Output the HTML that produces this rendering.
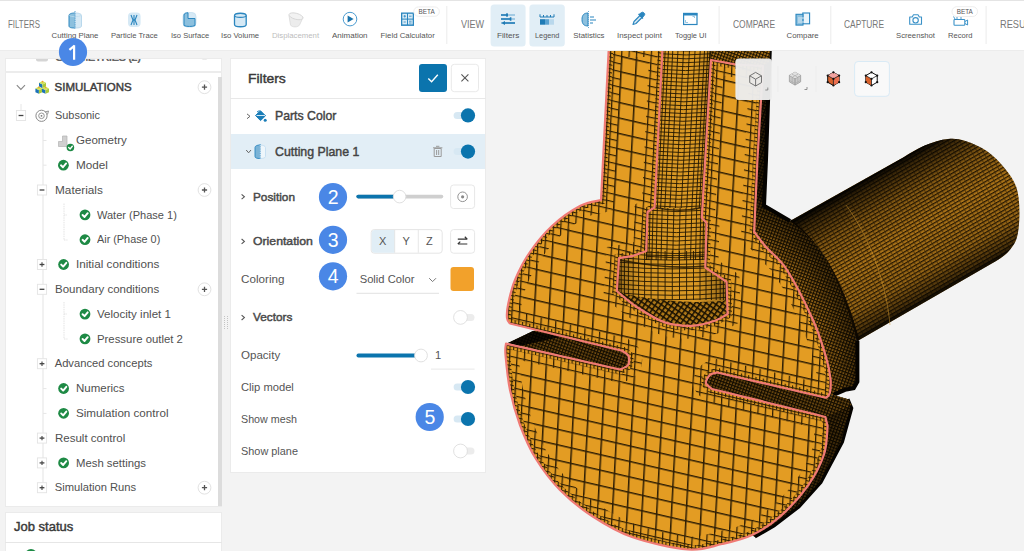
<!DOCTYPE html><html><head><meta charset="utf-8"><style>
html,body{margin:0;padding:0;width:1024px;height:551px;overflow:hidden;background:#f3f3f3;position:relative;font-family:"Liberation Sans",sans-serif;}
.t{position:absolute;white-space:nowrap;transform-origin:0 0;}
.a{position:absolute;}
</style></head><body>
<svg class="a" style="left:0;top:0" width="1024" height="551" viewBox="0 0 1024 551">
<defs>
<pattern id="pc" width="14.6" height="15.5" patternUnits="userSpaceOnUse" patternTransform="translate(3,6) skewY(13) skewX(-3)">
<rect width="14.6" height="15.5" fill="#e39c23"/><rect width="1.5" height="15.5" fill="#2e1e04"/><rect width="14.6" height="1.5" fill="#2e1e04"/></pattern>
<pattern id="pm" width="7.3" height="7.75" patternUnits="userSpaceOnUse" patternTransform="translate(3,6) skewY(13) skewX(-3)">
<rect width="7.3" height="7.75" fill="#e39c23"/><rect width="1.2" height="7.75" fill="#2e1e04"/><rect width="7.3" height="1.2" fill="#2e1e04"/></pattern>
<pattern id="pf" width="3.65" height="3.9" patternUnits="userSpaceOnUse" patternTransform="translate(3,6) skewY(13) skewX(-3)">
<rect width="3.65" height="3.9" fill="#e39c23"/><rect width="1.1" height="3.9" fill="#2e1e04"/><rect width="3.65" height="1.1" fill="#2e1e04"/></pattern>
<pattern id="pb" width="4.6" height="4.4" patternUnits="userSpaceOnUse" patternTransform="skewY(-2)">
<rect width="4.6" height="4.4" fill="#e6a126"/><rect width="1.0" height="4.4" fill="#2e1e04"/><rect width="4.6" height="1.0" fill="#2e1e04"/></pattern>
<pattern id="pcyl" width="5" height="3.4" patternUnits="userSpaceOnUse" patternTransform="rotate(-30)">
<rect width="5" height="3.4" fill="#b87c1a"/><rect width="5" height="1.2" fill="#2a1a02"/><rect width="0.7" height="3.4" fill="#4a3006"/></pattern>
<pattern id="pside" width="3" height="3" patternUnits="userSpaceOnUse" patternTransform="rotate(20)">
<rect width="3.6" height="3.6" fill="#c2821c"/><rect width="1.2" height="3.6" fill="#1e1402"/><rect width="3.6" height="1.2" fill="#1e1402"/></pattern>
<pattern id="pdiag" width="4.5" height="4.5" patternUnits="userSpaceOnUse" patternTransform="rotate(35)">
<rect width="4.5" height="4.5" fill="#d8951f"/><rect width="1.5" height="4.5" fill="#1e1402"/><rect width="4.5" height="1.5" fill="#1e1402"/></pattern>
<radialGradient id="gside" gradientUnits="userSpaceOnUse" cx="668" cy="372" r="200"><stop offset="0.78" stop-color="#000" stop-opacity="0"/><stop offset="1" stop-color="#000" stop-opacity="0.7"/></radialGradient>
<clipPath id="cf"><path d="M609,44 L601,200 C597.5,201.0 588.2,201.7 580.0,206.0 C571.8,210.3 560.3,218.3 552.0,226.0 C543.7,233.7 536.2,243.0 530.0,252.0 C523.8,261.0 518.7,271.2 515.0,280.0 C511.3,288.8 509.3,298.7 508.0,305.0 C506.7,311.3 506.7,314.9 507.0,318.0 C507.3,321.1 509.5,322.6 510.0,323.5 L622,350.8 C623.1,351.7 627.5,353.6 628.5,356.0 C629.5,358.4 629.4,362.8 628.0,365.0 C626.6,367.2 621.3,368.8 620.0,369.5 L506,343.6 C505.9,345.5 504.8,347.3 505.5,355.0 C506.2,362.7 507.6,378.3 510.0,390.0 C512.4,401.7 515.7,413.5 520.0,425.0 C524.3,436.5 529.3,448.2 536.0,459.0 C542.7,469.8 550.7,480.5 560.0,490.0 C569.3,499.5 580.0,508.2 592.0,516.0 C604.0,523.8 616.0,531.4 632.0,537.0 C648.0,542.6 673.0,548.3 688.0,549.5 C703.0,550.7 711.3,546.4 722.0,544.0 C732.7,541.6 742.3,539.6 752.0,535.0 C761.7,530.4 770.7,524.8 780.0,516.6 C789.3,508.4 800.7,496.0 808.0,485.6 C815.3,475.2 820.7,464.4 824.0,454.5 C827.3,444.6 827.0,430.8 827.6,426.0 L825.4,417 L818,415 L712,389 C711.0,388.0 706.3,385.3 706.0,383.0 C705.7,380.7 708.2,376.8 710.0,375.0 C711.8,373.2 715.8,372.9 717.0,372.5 L826,397.8 C826.6,397.0 829.0,396.1 829.8,393.0 C830.5,389.9 831.1,385.0 830.5,379.0 C829.9,373.0 828.9,366.8 826.0,357.0 C823.1,347.2 819.5,334.5 813.0,320.0 C806.5,305.5 794.8,282.2 787.0,270.0 C779.2,257.8 771.5,253.4 766.0,247.0 C760.5,240.6 756.2,234.3 754.2,231.8 L757.4,160 L761,100 L763,66 L736,64.5 L711,60 L701.8,218 L706.5,222.8 L705.3,267.6 L716,274.7 L726.6,281.8 L727.6,314 C725.3,315.2 719.9,319.0 714.0,321.0 C708.1,323.0 700.2,325.6 692.0,325.8 C683.8,326.0 673.8,325.5 664.7,322.4 C655.6,319.3 645.4,312.6 637.4,307.4 C629.4,302.2 620.2,293.7 616.8,291.0 L619,258.2 L633.3,255.8 L646.3,251 L647.5,212 L654.6,207.4 L662.7,44 Z"/></clipPath><clipPath id="ccav"><path d="M662.7,44 L654.6,207.4 L647.5,212 L646.3,251 L633.3,255.8 L619,258.2 L616.8,291 C620.2,293.7 629.4,302.2 637.4,307.4 C645.4,312.6 655.6,319.3 664.7,322.4 C673.8,325.5 683.8,326.0 692.0,325.8 C700.2,325.6 708.1,323.0 714.0,321.0 C719.9,319.0 725.3,315.2 727.6,314.0 L726.6,281.8 L716,274.7 L705.3,267.6 L706.5,222.8 L701.8,218 L711,60 L711,44 Z"/></clipPath>
<linearGradient id="gcyl" gradientUnits="userSpaceOnUse" x1="900" y1="160" x2="967.5" y2="277">
<stop offset="0" stop-color="#000" stop-opacity="0.95"/><stop offset="0.06" stop-color="#000" stop-opacity="0.7"/><stop offset="0.25" stop-color="#000" stop-opacity="0.3"/><stop offset="0.5" stop-color="#000" stop-opacity="0.08"/><stop offset="0.8" stop-color="#000" stop-opacity="0.2"/><stop offset="0.95" stop-color="#000" stop-opacity="0.6"/><stop offset="1" stop-color="#000" stop-opacity="0.9"/></linearGradient>
<linearGradient id="gbolt" x1="0" y1="0" x2="1" y2="0">
<stop offset="0" stop-color="#000" stop-opacity="0.35"/><stop offset="0.2" stop-color="#000" stop-opacity="0.08"/><stop offset="0.7" stop-color="#000" stop-opacity="0.05"/><stop offset="1" stop-color="#000" stop-opacity="0.35"/></linearGradient>
</defs>
<path d="M790,221 L900,159.2 C904.1,156.9 916.7,148.8 924.7,145.4 C932.7,142.0 941.1,139.6 947.9,138.9 C954.7,138.2 958.8,138.9 965.3,141.0 C971.8,143.1 980.6,146.7 987.1,151.2 C993.6,155.7 999.6,162.0 1004.5,167.9 C1009.4,173.8 1013.7,179.6 1016.2,186.8 C1018.7,194.0 1019.3,202.6 1019.4,211.0 C1019.5,219.4 1018.9,230.2 1017.0,237.0 C1015.1,243.8 1011.4,248.1 1008.0,252.0 C1004.6,255.9 998.8,259.1 996.9,260.5 L857.4,341 L835.8,280 L822.7,253.6 L805,234 Z" fill="url(#pcyl)"/>
<path d="M790,221 L900,159.2 C904.1,156.9 916.7,148.8 924.7,145.4 C932.7,142.0 941.1,139.6 947.9,138.9 C954.7,138.2 958.8,138.9 965.3,141.0 C971.8,143.1 980.6,146.7 987.1,151.2 C993.6,155.7 999.6,162.0 1004.5,167.9 C1009.4,173.8 1013.7,179.6 1016.2,186.8 C1018.7,194.0 1019.3,202.6 1019.4,211.0 C1019.5,219.4 1018.9,230.2 1017.0,237.0 C1015.1,243.8 1011.4,248.1 1008.0,252.0 C1004.6,255.9 998.8,259.1 996.9,260.5 L857.4,341 L835.8,280 L822.7,253.6 L805,234 Z" fill="url(#gcyl)"/>
<path d="M790,221 C800,229 815,244 826,262 C838,282 850,312 857.4,341" fill="none" stroke="#0a0600" stroke-width="4" opacity="0.9"/>
<path d="M846,205 C868,235 886,280 890,325" stroke="#d49a30" stroke-width="1" fill="none" opacity="0.5"/>
<path d="M754.2,231.8 L757.4,160 L761,100 L763,44 L771,44 L766,160 L764,205.7 L790,221 C792.5,223.2 799.5,228.6 805.0,234.0 C810.5,239.4 817.6,245.9 822.7,253.6 C827.8,261.3 831.6,270.3 835.8,280.0 C840.0,289.7 844.6,302.0 848.0,312.0 C851.4,322.0 854.4,330.3 856.0,340.0 C857.6,349.7 857.2,363.0 857.4,370.0 C857.6,377.0 858.0,378.8 857.4,381.8 C856.8,384.9 855.8,387.0 853.7,388.3 C851.6,389.6 848.4,388.7 845.0,389.8 C841.6,390.9 835.3,394.0 833.4,394.8 L826,397.8 L829.8,393 L830.5,379 L826,357 L813,320 L787,270 L766,247 Z" fill="url(#pside)"/>
<path d="M857.4,341 L848,312 L835.8,280 L822.7,253.6 L805,234 L790,221 L764,205.7 L766,160 L771,44 L763,44 L761,100 L757.4,160 L754.2,231.8 L766,247 L787,270 L813,320 L826,357 L830.5,379 L829.8,393 L826,397.8 L833.4,394.8 L845,389.8 L853.7,388.3 L857.4,381.8 Z" fill="#000" opacity="0.1"/>
<path d="M754.2,231.8 L757.4,160 L761,100 L763,44 L771,44 L766,160 L764,205.7 L790,221 C792.5,223.2 799.5,228.6 805.0,234.0 C810.5,239.4 817.6,245.9 822.7,253.6 C827.8,261.3 831.6,270.3 835.8,280.0 C840.0,289.7 844.6,302.0 848.0,312.0 C851.4,322.0 854.4,330.3 856.0,340.0 C857.6,349.7 857.2,363.0 857.4,370.0 C857.6,377.0 858.0,378.8 857.4,381.8 C856.8,384.9 855.8,387.0 853.7,388.3 C851.6,389.6 848.4,388.7 845.0,389.8 C841.6,390.9 835.3,394.0 833.4,394.8 L826,397.8 L829.8,393 L830.5,379 L826,357 L813,320 L787,270 L766,247 Z" fill="url(#gside)"/>
<path d="M770,44 L766,160 L764,205.7 L790,221" fill="none" stroke="#050300" stroke-width="4"/>
<path d="M857.4,341 L857.4,381.8 L853.7,388.3 L845,389.8 L833.4,394.8" fill="none" stroke="#050300" stroke-width="4"/>
<path d="M711,44 L771,44 L769,62 L763,66 L736,64.5 L711,60 Z" fill="url(#pside)"/>
<path d="M826,417 L836.3,396.3 L848,399.2 L851.8,408 L842.5,442 L821,482.5 L799,507 L774,526 L755,537 L752,535 L780,516.6 L808,485.6 L824,454.5 L827.6,426 Z" fill="url(#pside)"/>
<path d="M826,417 L836.3,396.3 L848,399.2 L851.8,408 L842.5,442 L821,482.5 L799,507 L774,526 L755,537 L752,535 L780,516.6 L808,485.6 L824,454.5 L827.6,426 Z" fill="#000" opacity="0.62"/>
<path d="M848,399.2 L851.8,408 L842.5,442 L821,482.5 L799,507 L774,526 L755,537" fill="none" stroke="#050300" stroke-width="3"/>
<path d="M712,389 L706,383 L710,375 L717,372.5 L826,397.8 L833.4,394.8 L848,399.2 L851.5,405 L826,417 L818,415 Z" fill="url(#pside)"/>
<path d="M712,389 L706,383 L710,375 L717,372.5 L826,397.8 L833.4,394.8 L848,399.2 L851.5,405 L826,417 L818,415 Z" fill="#000" opacity="0.4"/>
<path d="M508,343 L533,331 L545,329 L622,350.8 L628.5,356 L628,365 L620,369.5 Z" fill="url(#pside)"/>
<path d="M508,343 L533,331 L545,329 L622,350.8 L628.5,356 L628,365 L620,369.5 Z" fill="#000" opacity="0.4"/>
<path d="M508,343 L533,331 L560,337 L520,346 Z" fill="#000" opacity="0.8"/>
<path d="M609,44 L601,200 C597.5,201.0 588.2,201.7 580.0,206.0 C571.8,210.3 560.3,218.3 552.0,226.0 C543.7,233.7 536.2,243.0 530.0,252.0 C523.8,261.0 518.7,271.2 515.0,280.0 C511.3,288.8 509.3,298.7 508.0,305.0 C506.7,311.3 506.7,314.9 507.0,318.0 C507.3,321.1 509.5,322.6 510.0,323.5 L622,350.8 C623.1,351.7 627.5,353.6 628.5,356.0 C629.5,358.4 629.4,362.8 628.0,365.0 C626.6,367.2 621.3,368.8 620.0,369.5 L506,343.6 C505.9,345.5 504.8,347.3 505.5,355.0 C506.2,362.7 507.6,378.3 510.0,390.0 C512.4,401.7 515.7,413.5 520.0,425.0 C524.3,436.5 529.3,448.2 536.0,459.0 C542.7,469.8 550.7,480.5 560.0,490.0 C569.3,499.5 580.0,508.2 592.0,516.0 C604.0,523.8 616.0,531.4 632.0,537.0 C648.0,542.6 673.0,548.3 688.0,549.5 C703.0,550.7 711.3,546.4 722.0,544.0 C732.7,541.6 742.3,539.6 752.0,535.0 C761.7,530.4 770.7,524.8 780.0,516.6 C789.3,508.4 800.7,496.0 808.0,485.6 C815.3,475.2 820.7,464.4 824.0,454.5 C827.3,444.6 827.0,430.8 827.6,426.0 L825.4,417 L818,415 L712,389 C711.0,388.0 706.3,385.3 706.0,383.0 C705.7,380.7 708.2,376.8 710.0,375.0 C711.8,373.2 715.8,372.9 717.0,372.5 L826,397.8 C826.6,397.0 829.0,396.1 829.8,393.0 C830.5,389.9 831.1,385.0 830.5,379.0 C829.9,373.0 828.9,366.8 826.0,357.0 C823.1,347.2 819.5,334.5 813.0,320.0 C806.5,305.5 794.8,282.2 787.0,270.0 C779.2,257.8 771.5,253.4 766.0,247.0 C760.5,240.6 756.2,234.3 754.2,231.8 L757.4,160 L761,100 L763,66 L736,64.5 L711,60 L701.8,218 L706.5,222.8 L705.3,267.6 L716,274.7 L726.6,281.8 L727.6,314 C725.3,315.2 719.9,319.0 714.0,321.0 C708.1,323.0 700.2,325.6 692.0,325.8 C683.8,326.0 673.8,325.5 664.7,322.4 C655.6,319.3 645.4,312.6 637.4,307.4 C629.4,302.2 620.2,293.7 616.8,291.0 L619,258.2 L633.3,255.8 L646.3,251 L647.5,212 L654.6,207.4 L662.7,44 Z" fill="url(#pc)"/>
<g clip-path="url(#cf)"><path d="M609,44 L601,200 C597.5,201.0 588.2,201.7 580.0,206.0 C571.8,210.3 560.3,218.3 552.0,226.0 C543.7,233.7 536.2,243.0 530.0,252.0 C523.8,261.0 518.7,271.2 515.0,280.0 C511.3,288.8 509.3,298.7 508.0,305.0 C506.7,311.3 506.7,314.9 507.0,318.0 C507.3,321.1 509.5,322.6 510.0,323.5 L622,350.8 C623.1,351.7 627.5,353.6 628.5,356.0 C629.5,358.4 629.4,362.8 628.0,365.0 C626.6,367.2 621.3,368.8 620.0,369.5 L506,343.6 C505.9,345.5 504.8,347.3 505.5,355.0 C506.2,362.7 507.6,378.3 510.0,390.0 C512.4,401.7 515.7,413.5 520.0,425.0 C524.3,436.5 529.3,448.2 536.0,459.0 C542.7,469.8 550.7,480.5 560.0,490.0 C569.3,499.5 580.0,508.2 592.0,516.0 C604.0,523.8 616.0,531.4 632.0,537.0 C648.0,542.6 673.0,548.3 688.0,549.5 C703.0,550.7 711.3,546.4 722.0,544.0 C732.7,541.6 742.3,539.6 752.0,535.0 C761.7,530.4 770.7,524.8 780.0,516.6 C789.3,508.4 800.7,496.0 808.0,485.6 C815.3,475.2 820.7,464.4 824.0,454.5 C827.3,444.6 827.0,430.8 827.6,426.0 L825.4,417 L818,415 L712,389 C711.0,388.0 706.3,385.3 706.0,383.0 C705.7,380.7 708.2,376.8 710.0,375.0 C711.8,373.2 715.8,372.9 717.0,372.5 L826,397.8 C826.6,397.0 829.0,396.1 829.8,393.0 C830.5,389.9 831.1,385.0 830.5,379.0 C829.9,373.0 828.9,366.8 826.0,357.0 C823.1,347.2 819.5,334.5 813.0,320.0 C806.5,305.5 794.8,282.2 787.0,270.0 C779.2,257.8 771.5,253.4 766.0,247.0 C760.5,240.6 756.2,234.3 754.2,231.8 L757.4,160 L761,100 L763,66 L736,64.5 L711,60 L701.8,218 L706.5,222.8 L705.3,267.6 L716,274.7 L726.6,281.8 L727.6,314 C725.3,315.2 719.9,319.0 714.0,321.0 C708.1,323.0 700.2,325.6 692.0,325.8 C683.8,326.0 673.8,325.5 664.7,322.4 C655.6,319.3 645.4,312.6 637.4,307.4 C629.4,302.2 620.2,293.7 616.8,291.0 L619,258.2 L633.3,255.8 L646.3,251 L647.5,212 L654.6,207.4 L662.7,44 Z" fill="none" stroke="url(#pm)" stroke-width="26" opacity="1"/><path d="M609,44 L601,200 C597.5,201.0 588.2,201.7 580.0,206.0 C571.8,210.3 560.3,218.3 552.0,226.0 C543.7,233.7 536.2,243.0 530.0,252.0 C523.8,261.0 518.7,271.2 515.0,280.0 C511.3,288.8 509.3,298.7 508.0,305.0 C506.7,311.3 506.7,314.9 507.0,318.0 C507.3,321.1 509.5,322.6 510.0,323.5 L622,350.8 C623.1,351.7 627.5,353.6 628.5,356.0 C629.5,358.4 629.4,362.8 628.0,365.0 C626.6,367.2 621.3,368.8 620.0,369.5 L506,343.6 C505.9,345.5 504.8,347.3 505.5,355.0 C506.2,362.7 507.6,378.3 510.0,390.0 C512.4,401.7 515.7,413.5 520.0,425.0 C524.3,436.5 529.3,448.2 536.0,459.0 C542.7,469.8 550.7,480.5 560.0,490.0 C569.3,499.5 580.0,508.2 592.0,516.0 C604.0,523.8 616.0,531.4 632.0,537.0 C648.0,542.6 673.0,548.3 688.0,549.5 C703.0,550.7 711.3,546.4 722.0,544.0 C732.7,541.6 742.3,539.6 752.0,535.0 C761.7,530.4 770.7,524.8 780.0,516.6 C789.3,508.4 800.7,496.0 808.0,485.6 C815.3,475.2 820.7,464.4 824.0,454.5 C827.3,444.6 827.0,430.8 827.6,426.0 L825.4,417 L818,415 L712,389 C711.0,388.0 706.3,385.3 706.0,383.0 C705.7,380.7 708.2,376.8 710.0,375.0 C711.8,373.2 715.8,372.9 717.0,372.5 L826,397.8 C826.6,397.0 829.0,396.1 829.8,393.0 C830.5,389.9 831.1,385.0 830.5,379.0 C829.9,373.0 828.9,366.8 826.0,357.0 C823.1,347.2 819.5,334.5 813.0,320.0 C806.5,305.5 794.8,282.2 787.0,270.0 C779.2,257.8 771.5,253.4 766.0,247.0 C760.5,240.6 756.2,234.3 754.2,231.8 L757.4,160 L761,100 L763,66 L736,64.5 L711,60 L701.8,218 L706.5,222.8 L705.3,267.6 L716,274.7 L726.6,281.8 L727.6,314 C725.3,315.2 719.9,319.0 714.0,321.0 C708.1,323.0 700.2,325.6 692.0,325.8 C683.8,326.0 673.8,325.5 664.7,322.4 C655.6,319.3 645.4,312.6 637.4,307.4 C629.4,302.2 620.2,293.7 616.8,291.0 L619,258.2 L633.3,255.8 L646.3,251 L647.5,212 L654.6,207.4 L662.7,44 Z" fill="none" stroke="url(#pf)" stroke-width="9"/></g>
<path d="M662.7,44 L654.6,207.4 L647.5,212 L646.3,251 L633.3,255.8 L619,258.2 L616.8,291 C620.2,293.7 629.4,302.2 637.4,307.4 C645.4,312.6 655.6,319.3 664.7,322.4 C673.8,325.5 683.8,326.0 692.0,325.8 C700.2,325.6 708.1,323.0 714.0,321.0 C719.9,319.0 725.3,315.2 727.6,314.0 L726.6,281.8 L716,274.7 L705.3,267.6 L706.5,222.8 L701.8,218 L711,60 L711,44 Z" fill="#e6a126"/>
<g clip-path="url(#ccav)"><g stroke="#241802" stroke-width="0.9" fill="none"><path d="M662.7,44 L654.6,208 M663.4,44 L655.3,208 M665.5,44 L657.3,208 M668.8,44 L660.6,208 M673.1,44 L664.8,208 M678.3,44 L669.9,208 M683.9,44 L675.4,208 M689.8,44 L681.2,208 M695.4,44 L686.7,208 M700.6,44 L691.8,208 M704.9,44 L696.0,208 M708.2,44 L699.3,208 M710.3,44 L701.3,208 M711.0,44 L702.0,208 M662.6,46.0 Q686.7,48.4 710.9,46.0 M662.4,49.9 Q686.5,52.2 710.7,49.9 M662.2,53.8 Q686.3,56.1 710.5,53.8 M662.0,57.6 Q686.1,60.0 710.3,57.6 M661.8,61.5 Q685.9,63.9 710.0,61.5 M661.6,65.5 Q685.7,67.9 709.8,65.5 M661.4,69.4 Q685.5,71.8 709.6,69.4 M661.3,73.3 Q685.3,75.7 709.4,73.3 M661.1,77.2 Q685.1,79.6 709.2,77.2 M660.9,81.1 Q684.9,83.5 709.0,81.1 M660.7,85.0 Q684.7,87.4 708.8,85.0 M660.5,88.9 Q684.5,91.3 708.5,88.9 M660.3,92.8 Q684.3,95.2 708.3,92.8 M660.1,96.7 Q684.1,99.1 708.1,96.7 M659.9,100.6 Q683.9,103.0 707.9,100.6 M659.7,104.5 Q683.7,106.9 707.7,104.5 M659.5,108.4 Q683.5,110.8 707.5,108.4 M659.3,112.3 Q683.3,114.7 707.3,112.3 M659.1,116.2 Q683.1,118.6 707.0,116.2 M658.9,120.1 Q682.9,122.5 706.8,120.1 M658.8,124.0 Q682.7,126.4 706.6,124.0 M658.6,127.9 Q682.5,130.3 706.4,127.9 M658.4,131.8 Q682.3,134.2 706.2,131.8 M658.2,135.7 Q682.1,138.1 706.0,135.7 M658.0,139.6 Q681.9,142.0 705.8,139.6 M657.8,143.5 Q681.7,145.9 705.5,143.5 M657.6,147.4 Q681.5,149.8 705.3,147.4 M657.4,151.3 Q681.3,153.7 705.1,151.3 M657.2,155.2 Q681.1,157.6 704.9,155.2 M657.0,159.1 Q680.9,161.5 704.7,159.1 M656.8,163.0 Q680.6,165.4 704.5,163.0 M656.6,166.9 Q680.4,169.3 704.3,166.9 M656.4,170.8 Q680.2,173.2 704.0,170.8 M656.2,174.7 Q680.0,177.1 703.8,174.7 M656.1,178.6 Q679.8,181.0 703.6,178.6 M655.9,182.5 Q679.6,184.9 703.4,182.5 M655.7,186.4 Q679.4,188.8 703.2,186.4 M655.5,190.3 Q679.2,192.7 703.0,190.3 M655.3,194.2 Q679.0,196.6 702.8,194.2 M655.1,198.1 Q678.8,200.5 702.5,198.1 M654.9,202.0 Q678.6,204.4 702.3,202.0 M654.7,205.9 Q678.4,208.3 702.1,205.9 "/></g>
<g stroke="#241802" stroke-width="0.9" fill="none"><path d="M647.5,208 L646.3,260 M648.1,208 L646.9,260 M650.1,208 L648.9,260 M653.1,208 L651.9,260 M657.3,208 L656.1,260 M662.2,208 L661.0,260 M667.9,208 L666.7,260 M673.9,208 L672.7,260 M680.1,208 L678.9,260 M686.1,208 L684.9,260 M691.8,208 L690.5,260 M696.7,208 L695.5,260 M700.9,208 L699.7,260 M703.9,208 L702.7,260 M705.9,208 L704.7,260 M706.5,208 L705.3,260 M647.5,210.1 Q677.0,213.1 706.5,210.1 M647.4,214.3 Q676.9,217.3 706.4,214.3 M647.3,218.5 Q676.8,221.5 706.3,218.5 M647.2,222.7 Q676.7,225.7 706.2,222.7 M647.1,226.9 Q676.6,229.9 706.1,226.9 M647.0,231.1 Q676.5,234.1 706.0,231.1 M646.9,235.3 Q676.4,238.3 705.9,235.3 M646.8,239.5 Q676.3,242.5 705.8,239.5 M646.7,243.7 Q676.2,246.7 705.7,243.7 M646.6,247.9 Q676.1,250.9 705.6,247.9 M646.5,252.1 Q676.0,255.1 705.5,252.1 M646.4,256.3 Q675.9,259.3 705.4,256.3 "/></g>
<g stroke="#241802" stroke-width="0.9" fill="none"><path d="M617.0,251 L617.0,300 M617.5,251 L617.5,300 M618.9,251 L618.9,300 M621.2,251 L621.2,300 M624.4,251 L624.4,300 M628.4,251 L628.4,300 M633.2,251 L633.2,300 M638.6,251 L638.6,300 M644.6,251 L644.6,300 M651.1,251 L651.1,300 M658.0,251 L658.0,300 M665.1,251 L665.1,300 M672.3,251 L672.3,300 M679.5,251 L679.5,300 M686.6,251 L686.6,300 M693.5,251 L693.5,300 M700.0,251 L700.0,300 M706.0,251 L706.0,300 M711.4,251 L711.4,300 M716.2,251 L716.2,300 M720.2,251 L720.2,300 M723.4,251 L723.4,300 M725.7,251 L725.7,300 M727.1,251 L727.1,300 M727.6,251 L727.6,300 M617.0,253.2 Q672.3,258.2 727.6,253.2 M617.0,257.6 Q672.3,262.6 727.6,257.6 M617.0,262.0 Q672.3,267.0 727.6,262.0 M617.0,266.4 Q672.3,271.4 727.6,266.4 M617.0,270.8 Q672.3,275.8 727.6,270.8 M617.0,275.2 Q672.3,280.2 727.6,275.2 M617.0,279.6 Q672.3,284.6 727.6,279.6 M617.0,284.0 Q672.3,289.0 727.6,284.0 M617.0,288.4 Q672.3,293.4 727.6,288.4 M617.0,292.8 Q672.3,297.8 727.6,292.8 M617.0,297.2 Q672.3,302.2 727.6,297.2 "/></g>
<path d="M662.7,44 L654.6,207.4 L647.5,212 L646.3,251 L633.3,255.8 L619,258.2 L616.8,291 C620.2,293.7 629.4,302.2 637.4,307.4 C645.4,312.6 655.6,319.3 664.7,322.4 C673.8,325.5 683.8,326.0 692.0,325.8 C700.2,325.6 708.1,323.0 714.0,321.0 C719.9,319.0 725.3,315.2 727.6,314.0 L726.6,281.8 L716,274.7 L705.3,267.6 L706.5,222.8 L701.8,218 L711,60 L711,44 Z" fill="url(#gbolt)"/></g>
<path d="M616.8,291 C640,300 700,305 727.6,300 L727.6,314 L714,321 L692,325.8 L664.7,322.4 L637.4,307.4 Z" fill="url(#pdiag)"/>
<path d="M616.8,291 C640,300 700,305 727.6,300 L727.6,314 L714,321 L692,325.8 L664.7,322.4 L637.4,307.4 Z" fill="#000" opacity="0.2"/>
<path d="M655,207.5 Q680,213 702,207.5 M620,260 Q670,270 706,266" fill="none" stroke="#1e1402" stroke-width="1.6" opacity="0.8"/>
<path d="M609,44 L601,200 C597.5,201.0 588.2,201.7 580.0,206.0 C571.8,210.3 560.3,218.3 552.0,226.0 C543.7,233.7 536.2,243.0 530.0,252.0 C523.8,261.0 518.7,271.2 515.0,280.0 C511.3,288.8 509.3,298.7 508.0,305.0 C506.7,311.3 506.7,314.9 507.0,318.0 C507.3,321.1 509.5,322.6 510.0,323.5 L622,350.8 C623.1,351.7 627.5,353.6 628.5,356.0 C629.5,358.4 629.4,362.8 628.0,365.0 C626.6,367.2 621.3,368.8 620.0,369.5 L506,343.6 C505.9,345.5 504.8,347.3 505.5,355.0 C506.2,362.7 507.6,378.3 510.0,390.0 C512.4,401.7 515.7,413.5 520.0,425.0 C524.3,436.5 529.3,448.2 536.0,459.0 C542.7,469.8 550.7,480.5 560.0,490.0 C569.3,499.5 580.0,508.2 592.0,516.0 C604.0,523.8 616.0,531.4 632.0,537.0 C648.0,542.6 673.0,548.3 688.0,549.5 C703.0,550.7 711.3,546.4 722.0,544.0 C732.7,541.6 742.3,539.6 752.0,535.0 C761.7,530.4 770.7,524.8 780.0,516.6 C789.3,508.4 800.7,496.0 808.0,485.6 C815.3,475.2 820.7,464.4 824.0,454.5 C827.3,444.6 827.0,430.8 827.6,426.0 L825.4,417 L818,415 L712,389 C711.0,388.0 706.3,385.3 706.0,383.0 C705.7,380.7 708.2,376.8 710.0,375.0 C711.8,373.2 715.8,372.9 717.0,372.5 L826,397.8 C826.6,397.0 829.0,396.1 829.8,393.0 C830.5,389.9 831.1,385.0 830.5,379.0 C829.9,373.0 828.9,366.8 826.0,357.0 C823.1,347.2 819.5,334.5 813.0,320.0 C806.5,305.5 794.8,282.2 787.0,270.0 C779.2,257.8 771.5,253.4 766.0,247.0 C760.5,240.6 756.2,234.3 754.2,231.8 L757.4,160 L761,100 L763,66 L736,64.5 L711,60 L701.8,218 L706.5,222.8 L705.3,267.6 L716,274.7 L726.6,281.8 L727.6,314 C725.3,315.2 719.9,319.0 714.0,321.0 C708.1,323.0 700.2,325.6 692.0,325.8 C683.8,326.0 673.8,325.5 664.7,322.4 C655.6,319.3 645.4,312.6 637.4,307.4 C629.4,302.2 620.2,293.7 616.8,291.0 L619,258.2 L633.3,255.8 L646.3,251 L647.5,212 L654.6,207.4 L662.7,44 Z" fill="none" stroke="#f07a74" stroke-width="2.2" stroke-linejoin="round"/>
</svg>
<div class="a" style="left:0;top:0;width:1024px;height:50px;background:#fff;border-top:1px solid #e4e4e4;box-sizing:border-box;"></div>
<div class="a" style="left:0;top:50px;width:1024px;height:1px;background:#ececec;"></div>
<svg class="a" style="left:0;top:0" width="1024" height="50" viewBox="0 0 1024 50">
<rect x="490.6" y="4.4" width="35" height="42.1" rx="3.5" fill="#e1eef6"/>
<rect x="529.4" y="4.4" width="35.4" height="42.1" rx="3.5" fill="#e1eef6"/>
<rect x="446.3" y="6" width="1" height="38" fill="#ececec"/>
<rect x="718.6" y="6" width="1" height="38" fill="#ececec"/>
<rect x="830.3" y="6" width="1" height="38" fill="#ececec"/>
<rect x="985.6" y="6" width="1" height="38" fill="#ececec"/>
<path d="M75,13 C71,13 69,14 69,15.5 V26 C69,27.5 71,28 75,28 Z" fill="#8cc0de" stroke="#2b86bf" stroke-width="1"/>
<path d="M75,13 C79,13 81.5,14 81.5,15.5 V26 C81.5,27.5 79,28 75,28 Z" fill="#d6e9f5" stroke="#b9d8ec" stroke-width="1"/>
<path d="M69.5,15.5 C70.5,17 79,17 81,15.5" fill="none" stroke="#bcdcee" stroke-width="0.8"/>
<line x1="75" y1="11" x2="75" y2="29" stroke="#5aa2d0" stroke-width="1" stroke-dasharray="1.2,1"/>
<rect x="128" y="12.5" width="12.6" height="14.5" rx="4" fill="#d6e9f5"/>
<path d="M131,15 L133,20 L131,25 M134,15 L134,25 M137,15 L135,20 L137,25" stroke="#2b86bf" stroke-width="1.1" fill="none"/>
<rect x="183" y="12.5" width="13" height="14.5" rx="4" fill="#d6e9f5" stroke="#c5e0f0" stroke-width="0.8"/>
<path d="M184,15 C184,13.5 186,12.8 188,12.8 V18.5 H195 V25.5 C193,26.8 186,26.8 184,25.5 Z" fill="#8cc0de" stroke="#2b86bf" stroke-width="1"/>
<path d="M234.5,15.5 C234.5,12.5 246.2,12.5 246.2,15.5 V24.5 C246.2,27.5 234.5,27.5 234.5,24.5 Z" fill="#d6e9f5" stroke="#2b86bf" stroke-width="1.3"/>
<path d="M234.5,15.5 C234.5,18 246.2,18 246.2,15.5" fill="none" stroke="#2b86bf" stroke-width="1.1"/>
<path d="M289,15.5 L290.5,25 C292,27.5 298,27.5 299.5,25 L303,17.5 Z" fill="#ececec" stroke="#dcdcdc" stroke-width="0.9"/><ellipse cx="296" cy="16.3" rx="7.2" ry="3" transform="rotate(15 296 16.3)" fill="#f2f2f2" stroke="#d6d6d6" stroke-width="0.9"/>
<circle cx="350" cy="19.1" r="6.8" fill="none" stroke="#4b9bd0" stroke-width="1"/>
<path d="M347.6,15.6 L353.6,19.1 L347.6,22.6 Z" fill="#1a73ab"/>
<rect x="401" y="12.5" width="13" height="13.4" fill="#2b86bf"/>
<rect x="402.3" y="13.8" width="4.7" height="4.8" fill="#d9ebf6"/>
<rect x="408" y="13.8" width="4.7" height="4.8" fill="#d9ebf6"/>
<rect x="402.3" y="19.6" width="4.7" height="4.8" fill="#d9ebf6"/>
<rect x="408" y="19.6" width="4.7" height="4.8" fill="#d9ebf6"/>
<path d="M403.5,16.2 h2.5 M404.7,15 v2.5 M409,16.2 h2.6 M403.6,22 h2.2 M409,21.2 h2.6 M409,23 h2.6" stroke="#2b86bf" stroke-width="0.8"/>
<path d="M501,15 H515 M501,19 H515 M501,23 H515" stroke="#8ec0de" stroke-width="1.3"/>
<path d="M501,15 H508 M501,19 H511 M505,23 H515" stroke="#1f7bb5" stroke-width="1.5"/>
<path d="M507,13.2 v3.6 M510.6,17.2 v3.6" stroke="#1f7bb5" stroke-width="1.6"/>
<path d="M501.2,23 L505,21 V25 Z" fill="#1f7bb5"/>
<path d="M540,17 H554 M540,14.3 v2.7 M543.5,15 v2 M547,15 v2 M550.5,15 v2 M554,14.3 v2.7" stroke="#1f7bb5" stroke-width="1"/>
<rect x="540" y="19.2" width="5" height="5.5" fill="#1f7bb5"/><rect x="545" y="19.2" width="4" height="5.5" fill="#5aa2d0"/><rect x="549" y="19.2" width="5" height="5.5" fill="#b9d8ec"/>
<path d="M588,13 C584,13 582,15 582,19.5 C582,24 584,26 588,26 Z" fill="#8cc0de" stroke="#2b86bf" stroke-width="1"/>
<line x1="588.5" y1="11" x2="588.5" y2="29" stroke="#5aa2d0" stroke-width="0.9" stroke-dasharray="1,1"/>
<path d="M590,17 H594 M590,20 H596 M590,23 H593" stroke="#2b86bf" stroke-width="1.1"/>
<path d="M633,24.5 L634,21.5 L640,15.5 L642,17.5 L636,23.5 Z" fill="#d6e9f5" stroke="#2b86bf" stroke-width="1.1" stroke-linejoin="round"/>
<path d="M639,14.5 L641.5,12.5 C643,11.5 645.5,13.5 644.5,15 L642.5,17.5 Z" fill="#2b86bf" stroke="#2b86bf" stroke-width="1"/>
<path d="M638.5,14 L643,18.5" stroke="#2b86bf" stroke-width="1.3"/>
<rect x="683.6" y="13.5" width="13.4" height="11" fill="#fff" stroke="#2b86bf" stroke-width="1.2"/>
<rect x="683" y="12.9" width="14.3" height="2.6" fill="#2b86bf"/>
<path d="M685.5,20 v2.5 h2.5 M694.5,18 v-1.5 h-2" stroke="#7fb6d8" stroke-width="0.8" fill="none"/>
<rect x="802.8" y="13" width="6.8" height="10.8" fill="#eaf4fa" stroke="#2b86bf" stroke-width="1.1"/>
<rect x="796" y="14.3" width="7" height="10.8" fill="#8cc0de" stroke="#2b86bf" stroke-width="1.1"/>
<path d="M798,18 h6 M798,20 h4 M798,22 h6" stroke="#e6f2f9" stroke-width="0.9"/>
<path d="M909.7,17 H912.2 L913.5,14.7 H918 L919.3,17 H921.5 V24.2 H909.7 Z" fill="none" stroke="#3b92c8" stroke-width="1.1" stroke-linejoin="round"/>
<circle cx="915.6" cy="20.3" r="2.7" fill="none" stroke="#3b92c8" stroke-width="1.1"/>
<rect x="954" y="19.5" width="10.8" height="5.8" rx="0.8" fill="none" stroke="#3b92c8" stroke-width="1.1"/>
<path d="M965,21.5 L967.6,20 V25 L965,23.5" fill="none" stroke="#3b92c8" stroke-width="1"/>
<path d="M953.5,16.5 L955,19 M957,17 v2 M961,17 v2" stroke="#3b92c8" stroke-width="0.9"/>
<rect x="413.75" y="6.9" width="25.6" height="9.4" rx="4.7" fill="#fff" stroke="#e8e8e8" stroke-width="0.8"/>
<text x="426.55" y="13.700000000000001" font-family="Liberation Sans" font-size="6.4" fill="#555" text-anchor="middle">BETA</text>
<rect x="952" y="6.7" width="25.5" height="9.8" rx="4.7" fill="#fff" stroke="#e8e8e8" stroke-width="0.8"/>
<text x="964.75" y="13.700000000000001" font-family="Liberation Sans" font-size="6.4" fill="#555" text-anchor="middle">BETA</text>
</svg>
<span class="t" style="left:8.00px;top:20.05px;font-size:10.3px;line-height:10.3px;color:#777;transform:scaleX(0.769);">FILTERS</span>
<span class="t" style="left:51.60px;top:31.57px;font-size:7.8px;line-height:7.8px;color:#555;">Cutting Plane</span>
<span class="t" style="left:111.25px;top:31.57px;font-size:7.8px;line-height:7.8px;color:#555;transform:scaleX(0.980);">Particle Trace</span>
<span class="t" style="left:170.60px;top:31.57px;font-size:7.8px;line-height:7.8px;color:#555;transform:scaleX(0.966);">Iso Surface</span>
<span class="t" style="left:221.25px;top:31.57px;font-size:7.8px;line-height:7.8px;color:#555;transform:scaleX(0.987);">Iso Volume</span>
<span class="t" style="left:271.90px;top:31.57px;font-size:7.8px;line-height:7.8px;color:#bdbdbd;">Displacement</span>
<span class="t" style="left:331.90px;top:31.57px;font-size:7.8px;line-height:7.8px;color:#555;transform:scaleX(1.026);">Animation</span>
<span class="t" style="left:380.60px;top:31.57px;font-size:7.8px;line-height:7.8px;color:#555;">Field Calculator</span>
<span class="t" style="left:497.00px;top:31.57px;font-size:7.8px;line-height:7.8px;color:#555;transform:scaleX(1.054);">Filters</span>
<span class="t" style="left:535.00px;top:31.57px;font-size:7.8px;line-height:7.8px;color:#555;transform:scaleX(0.937);">Legend</span>
<span class="t" style="left:573.30px;top:31.57px;font-size:7.8px;line-height:7.8px;color:#555;">Statistics</span>
<span class="t" style="left:617.00px;top:31.57px;font-size:7.8px;line-height:7.8px;color:#555;transform:scaleX(1.015);">Inspect point</span>
<span class="t" style="left:674.80px;top:31.57px;font-size:7.8px;line-height:7.8px;color:#555;transform:scaleX(0.959);">Toggle UI</span>
<span class="t" style="left:786.60px;top:31.57px;font-size:7.8px;line-height:7.8px;color:#555;">Compare</span>
<span class="t" style="left:896.00px;top:31.57px;font-size:7.8px;line-height:7.8px;color:#555;transform:scaleX(0.989);">Screenshot</span>
<span class="t" style="left:948.40px;top:31.57px;font-size:7.8px;line-height:7.8px;color:#555;transform:scaleX(0.974);">Record</span>
<span class="t" style="left:460.60px;top:19.74px;font-size:10.3px;line-height:10.3px;color:#777;transform:scaleX(0.878);">VIEW</span>
<span class="t" style="left:732.70px;top:20.34px;font-size:10.3px;line-height:10.3px;color:#777;transform:scaleX(0.821);">COMPARE</span>
<span class="t" style="left:844.40px;top:20.34px;font-size:10.3px;line-height:10.3px;color:#777;transform:scaleX(0.813);">CAPTURE</span>
<span class="t" style="left:1000.00px;top:20.34px;font-size:10.3px;line-height:10.3px;color:#777;transform:scaleX(0.898);">RESULTS</span>
<div class="a" style="left:5px;top:58px;width:217px;height:449px;background:#fff;border:1px solid #ebebeb;box-sizing:border-box;"></div>
<div class="a" style="left:5px;top:71px;width:217px;height:2px;background:#ececec;"></div>
<div class="a" style="left:218px;top:77px;width:4px;height:429px;background:#dcdcdc;"></div>
<div class="a" style="left:5px;top:512px;width:217px;height:45px;background:#fff;border:1px solid #ebebeb;box-sizing:border-box;"></div>
<div class="a" style="left:5px;top:542px;width:217px;height:1px;background:#e6e6e6;"></div>
<svg class="a" style="left:0;top:0" width="230" height="551" viewBox="0 0 230 551">
<clipPath id="ctop"><rect x="6" y="59" width="215" height="12"/></clipPath><g clip-path="url(#ctop)"><text x="55" y="61.2" font-family="Liberation Sans" font-weight="bold" font-size="11.5" fill="#666" textLength="86">GEOMETRIES (2)</text><rect x="36" y="51" width="12" height="10.5" rx="2" fill="#d5d5d5"/><circle cx="204.5" cy="53" r="6.4" fill="#fff" stroke="#e2e2e2"/></g>
<path d="M16.8,85.2 L20.9,89.4 L25,85.2" fill="none" stroke="#888" stroke-width="1.1"/>
<path d="M39,82.8 L42.5,84.4 V88.2 L39,86.6 Z" fill="#1b72b8"/><path d="M42.5,84.4 L46,82.8 V86.6 L42.5,88.2 Z" fill="#a9c93a"/><path d="M39,82.8 L42.5,81 L46,82.8 L42.5,84.4 Z" fill="#cfe05a"/><circle cx="42.5" cy="81.6" r="0.8" fill="#f39a2b"/><path d="M35.4,88.39999999999999 L38.9,90.0 V93.8 L35.4,92.19999999999999 Z" fill="#1b72b8"/><path d="M38.9,90.0 L42.4,88.39999999999999 V92.19999999999999 L38.9,93.8 Z" fill="#a9c93a"/><path d="M35.4,88.39999999999999 L38.9,86.6 L42.4,88.39999999999999 L38.9,90.0 Z" fill="#cfe05a"/><circle cx="38.9" cy="87.19999999999999" r="0.8" fill="#f39a2b"/><path d="M42,88.39999999999999 L45.5,90.0 V93.8 L42,92.19999999999999 Z" fill="#1b72b8"/><path d="M45.5,90.0 L49,88.39999999999999 V92.19999999999999 L45.5,93.8 Z" fill="#a9c93a"/><path d="M42,88.39999999999999 L45.5,86.6 L49,88.39999999999999 L45.5,90.0 Z" fill="#cfe05a"/><circle cx="45.5" cy="87.19999999999999" r="0.8" fill="#f39a2b"/>
<circle cx="204.5" cy="87.2" r="6.4" fill="#fff" stroke="#e2e2e2" stroke-width="1"/><path d="M201.9,87.2 h5.2 M204.5,84.60000000000001 v5.2" stroke="#555" stroke-width="1.3"/>
<path d="M21,104 V110" stroke="#e6e6e6" stroke-width="1"/>
<path d="M43,129 V488" stroke="#ebebeb" stroke-width="1.4"/>
<path d="M43,140.5 h3.5 M43,165.2 h3.5 M43,388.6 h3.5 M43,413.4 h3.5" stroke="#e6e6e6" stroke-width="1"/>
<path d="M64,203.5 V240 M64,215 h3 M64,240 h3.5 M64,302 V339 M64,314 h3 M64,339 h3.5" stroke="#e3e3e3" stroke-width="1" stroke-dasharray="1.5,0.8"/>
<rect x="16.4" y="110.5" width="9.2" height="10" fill="#fff" stroke="#e3e3e3" stroke-width="0.9"/><path d="M18.6,115.5 h4.8" stroke="#444" stroke-width="1.3"/>
<circle cx="41.5" cy="115.8" r="5.6" fill="none" stroke="#8a8a8a" stroke-width="1"/><circle cx="41.5" cy="115.8" r="2.8" fill="none" stroke="#8a8a8a" stroke-width="0.9"/><circle cx="41.5" cy="115.8" r="0.9" fill="#777"/><path d="M45,112 L48.5,111 L47.5,114.5" fill="none" stroke="#888" stroke-width="0.9"/>
<path d="M62.5,136 h4.5 v10.5 h-8.5 v-5 h4 Z" fill="#d0d0d0" stroke="#b3b3b3" stroke-width="0.7"/>
<circle cx="70.4" cy="147.5" r="3.8" fill="#1e8a45"/><path d="M68.69000000000001,147.576 L70.096,148.944 L72.30000000000001,146.284" fill="none" stroke="#fff" stroke-width="1.37" stroke-linecap="round" stroke-linejoin="round"/>
<circle cx="63.4" cy="165.2" r="5.4" fill="#1e8a45"/><path d="M60.97,165.308 L62.967999999999996,167.25199999999998 L66.1,163.47199999999998" fill="none" stroke="#fff" stroke-width="1.94" stroke-linecap="round" stroke-linejoin="round"/>
<rect x="37.4" y="185" width="9.2" height="10" fill="#fff" stroke="#e3e3e3" stroke-width="0.9"/><path d="M39.6,190 h4.8" stroke="#444" stroke-width="1.3"/>
<circle cx="204.5" cy="190" r="6.4" fill="#fff" stroke="#e2e2e2" stroke-width="1"/><path d="M201.9,190 h5.2 M204.5,187.4 v5.2" stroke="#555" stroke-width="1.3"/>
<circle cx="85" cy="214.9" r="5.4" fill="#1e8a45"/><path d="M82.57,215.008 L84.568,216.952 L87.7,213.172" fill="none" stroke="#fff" stroke-width="1.94" stroke-linecap="round" stroke-linejoin="round"/>
<circle cx="85" cy="239.7" r="5.4" fill="#1e8a45"/><path d="M82.57,239.808 L84.568,241.75199999999998 L87.7,237.97199999999998" fill="none" stroke="#fff" stroke-width="1.94" stroke-linecap="round" stroke-linejoin="round"/>
<rect x="37.4" y="259.5" width="9.2" height="10" fill="#fff" stroke="#e3e3e3" stroke-width="0.9"/><path d="M39.6,264.5 h4.8" stroke="#444" stroke-width="1.3"/><path d="M42,262.3 v4.4" stroke="#444" stroke-width="1.1"/>
<circle cx="63.6" cy="264.5" r="5.4" fill="#1e8a45"/><path d="M61.17,264.608 L63.168,266.552 L66.3,262.772" fill="none" stroke="#fff" stroke-width="1.94" stroke-linecap="round" stroke-linejoin="round"/>
<rect x="37.4" y="284.3" width="9.2" height="10" fill="#fff" stroke="#e3e3e3" stroke-width="0.9"/><path d="M39.6,289.3 h4.8" stroke="#444" stroke-width="1.3"/>
<circle cx="204.5" cy="289.3" r="6.4" fill="#fff" stroke="#e2e2e2" stroke-width="1"/><path d="M201.9,289.3 h5.2 M204.5,286.7 v5.2" stroke="#555" stroke-width="1.3"/>
<circle cx="85" cy="314.1" r="5.4" fill="#1e8a45"/><path d="M82.57,314.208 L84.568,316.15200000000004 L87.7,312.372" fill="none" stroke="#fff" stroke-width="1.94" stroke-linecap="round" stroke-linejoin="round"/>
<circle cx="85" cy="338.9" r="5.4" fill="#1e8a45"/><path d="M82.57,339.008 L84.568,340.952 L87.7,337.17199999999997" fill="none" stroke="#fff" stroke-width="1.94" stroke-linecap="round" stroke-linejoin="round"/>
<rect x="37.4" y="358.7" width="9.2" height="10" fill="#fff" stroke="#e3e3e3" stroke-width="0.9"/><path d="M39.6,363.7 h4.8" stroke="#444" stroke-width="1.3"/><path d="M42,361.5 v4.4" stroke="#444" stroke-width="1.1"/>
<circle cx="63.6" cy="388.5" r="5.4" fill="#1e8a45"/><path d="M61.17,388.608 L63.168,390.552 L66.3,386.772" fill="none" stroke="#fff" stroke-width="1.94" stroke-linecap="round" stroke-linejoin="round"/>
<circle cx="63.6" cy="413.3" r="5.4" fill="#1e8a45"/><path d="M61.17,413.408 L63.168,415.35200000000003 L66.3,411.572" fill="none" stroke="#fff" stroke-width="1.94" stroke-linecap="round" stroke-linejoin="round"/>
<rect x="37.4" y="433.1" width="9.2" height="10" fill="#fff" stroke="#e3e3e3" stroke-width="0.9"/><path d="M39.6,438.1 h4.8" stroke="#444" stroke-width="1.3"/><path d="M42,435.90000000000003 v4.4" stroke="#444" stroke-width="1.1"/>
<rect x="37.4" y="457.9" width="9.2" height="10" fill="#fff" stroke="#e3e3e3" stroke-width="0.9"/><path d="M39.6,462.9 h4.8" stroke="#444" stroke-width="1.3"/><path d="M42,460.7 v4.4" stroke="#444" stroke-width="1.1"/>
<circle cx="63.6" cy="462.9" r="5.4" fill="#1e8a45"/><path d="M61.17,463.008 L63.168,464.952 L66.3,461.17199999999997" fill="none" stroke="#fff" stroke-width="1.94" stroke-linecap="round" stroke-linejoin="round"/>
<rect x="37.4" y="482.7" width="9.2" height="10" fill="#fff" stroke="#e3e3e3" stroke-width="0.9"/><path d="M39.6,487.7 h4.8" stroke="#444" stroke-width="1.3"/><path d="M42,485.5 v4.4" stroke="#444" stroke-width="1.1"/>
<circle cx="204.5" cy="487.7" r="6.4" fill="#fff" stroke="#e2e2e2" stroke-width="1"/><path d="M201.9,487.7 h5.2 M204.5,485.09999999999997 v5.2" stroke="#555" stroke-width="1.3"/>
<circle cx="31" cy="555" r="6" fill="#1e8a45"/>
</svg>
<svg class="a" style="left:222px;top:310px" width="8" height="30"><path d="M2.5,6 V20 M5.5,6 V20" stroke="#c4c4c4" stroke-width="1" stroke-dasharray="1,1"/></svg>
<span class="t" style="left:54.60px;top:81.82px;font-size:11.5px;line-height:11.5px;color:#3d3d3d;-webkit-text-stroke:0.45px #3d3d3d;">SIMULATIONS</span>
<span class="t" style="left:54.60px;top:109.98px;font-size:11.2px;line-height:11.2px;color:#505050;transform:scaleX(0.977);">Subsonic</span>
<span class="t" style="left:76.10px;top:135.38px;font-size:11.2px;line-height:11.2px;color:#505050;transform:scaleX(1.034);">Geometry</span>
<span class="t" style="left:76.10px;top:159.98px;font-size:11.2px;line-height:11.2px;color:#505050;transform:scaleX(1.049);">Model</span>
<span class="t" style="left:54.60px;top:184.78px;font-size:11.2px;line-height:11.2px;color:#505050;transform:scaleX(1.054);">Materials</span>
<span class="t" style="left:97.30px;top:209.58px;font-size:11.2px;line-height:11.2px;color:#505050;transform:scaleX(0.985);">Water (Phase 1)</span>
<span class="t" style="left:97.30px;top:234.38px;font-size:11.2px;line-height:11.2px;color:#505050;transform:scaleX(0.969);">Air (Phase 0)</span>
<span class="t" style="left:76.10px;top:259.18px;font-size:11.2px;line-height:11.2px;color:#505050;transform:scaleX(1.046);">Initial conditions</span>
<span class="t" style="left:54.60px;top:283.98px;font-size:11.2px;line-height:11.2px;color:#505050;transform:scaleX(1.028);">Boundary conditions</span>
<span class="t" style="left:97.30px;top:308.78px;font-size:11.2px;line-height:11.2px;color:#505050;transform:scaleX(1.034);">Velocity inlet 1</span>
<span class="t" style="left:97.30px;top:333.58px;font-size:11.2px;line-height:11.2px;color:#505050;transform:scaleX(1.016);">Pressure outlet 2</span>
<span class="t" style="left:54.70px;top:358.38px;font-size:11.2px;line-height:11.2px;color:#505050;">Advanced concepts</span>
<span class="t" style="left:75.80px;top:383.18px;font-size:11.2px;line-height:11.2px;color:#505050;transform:scaleX(1.027);">Numerics</span>
<span class="t" style="left:75.80px;top:407.98px;font-size:11.2px;line-height:11.2px;color:#505050;transform:scaleX(1.040);">Simulation control</span>
<span class="t" style="left:54.70px;top:432.78px;font-size:11.2px;line-height:11.2px;color:#505050;transform:scaleX(1.028);">Result control</span>
<span class="t" style="left:75.80px;top:457.58px;font-size:11.2px;line-height:11.2px;color:#505050;transform:scaleX(1.013);">Mesh settings</span>
<span class="t" style="left:54.70px;top:482.38px;font-size:11.2px;line-height:11.2px;color:#505050;">Simulation Runs</span>
<span class="t" style="left:14.00px;top:520.62px;font-size:12.8px;line-height:12.8px;color:#3a3a3a;transform:scaleX(1.015);-webkit-text-stroke:0.45px #3a3a3a;">Job status</span>
<div class="a" style="left:230px;top:58px;width:256px;height:415px;background:#fff;border:1px solid #ebebeb;box-sizing:border-box;"></div>
<div class="a" style="left:230px;top:98px;width:256px;height:1px;background:#e8e8e8;"></div>
<div class="a" style="left:231px;top:134px;width:254px;height:35px;background:#e2eef6;"></div>
<svg class="a" style="left:0;top:0" width="500" height="551" viewBox="0 0 500 551">
<rect x="419" y="64" width="28" height="28" rx="3" fill="#0b74ad"/>
<path d="M428.3,78.5 L431.6,81.8 L437.8,74.8" fill="none" stroke="#fff" stroke-width="1.4"/>
<rect x="451.3" y="64.3" width="27.2" height="27.4" rx="3" fill="#fff" stroke="#e6e6e6" stroke-width="0.9"/>
<path d="M461.4,74.4 L468.4,81.4 M468.4,74.4 L461.4,81.4" stroke="#555" stroke-width="1.1"/>
<path d="M247,113.9 L250,116.3 L247,118.7" fill="none" stroke="#666" stroke-width="1"/>
<path d="M246.2,150 L248.6,152.8 L251,150" fill="none" stroke="#666" stroke-width="1"/>
<path d="M241.6,194.4 L244.4,196.8 L241.6,199.20000000000002" fill="none" stroke="#555" stroke-width="1.1"/>
<path d="M241.6,239.0 L244.4,241.4 L241.6,243.8" fill="none" stroke="#555" stroke-width="1.1"/>
<path d="M241.6,315.20000000000005 L244.4,317.6 L241.6,320.0" fill="none" stroke="#555" stroke-width="1.1"/>
<path d="M255.5,115.5 L260.5,110.8 L265.5,115.8 L260.5,120.6 Z" fill="#1a7db8" stroke="#1a7db8" stroke-width="1"/>
<path d="M256.5,115.5 L265,115.5" stroke="#d0e6f3" stroke-width="1"/>
<path d="M257,112 L259.5,110.5" stroke="#1a7db8" stroke-width="1"/>
<circle cx="265.2" cy="120.3" r="1.5" fill="#1a7db8"/>
<path d="M260,145 C257,145 255,146 255,147.5 V156.5 C255,158 257,158.5 260,158.5 Z" fill="#7ab3d6" stroke="#2b86bf" stroke-width="0.9"/>
<path d="M260,145 C263,145 265.5,146 265.5,147.5 V156.5 C265.5,158 263,158.5 260,158.5 Z" fill="#eef6fb" stroke="#c4def0" stroke-width="0.9"/>
<line x1="260.2" y1="144" x2="260.2" y2="159" stroke="#4a97ca" stroke-width="0.9" stroke-dasharray="1,0.8"/>
<path d="M434.2,148.5 h7 v8 h-7 Z" fill="none" stroke="#9a9a9a" stroke-width="1"/><path d="M433,147.8 h9.4 M436,146.3 h3.4 M436.6,150 v5 M438.7,150 v5" stroke="#9a9a9a" stroke-width="1"/>
<rect x="453.6" y="111.9" width="18" height="7" rx="3.5" fill="#d7e8f3"/><circle cx="468" cy="115.4" r="7.1" fill="#0b74ad"/>
<rect x="453.6" y="148.1" width="18" height="7" rx="3.5" fill="#d7e8f3"/><circle cx="468" cy="151.6" r="7.1" fill="#0b74ad"/>
<rect x="356.3" y="194.8" width="87" height="3.6" rx="1.8" fill="#cfcfcf"/>
<rect x="356.3" y="194.8" width="43" height="3.6" rx="1.8" fill="#0b74ad"/>
<circle cx="399.6" cy="196.6" r="6.3" fill="#fff" stroke="#dcdcdc" stroke-width="0.9"/>
<rect x="450.6" y="185" width="24" height="23.5" rx="3" fill="#fff" stroke="#e4e4e4" stroke-width="0.9"/>
<circle cx="462.6" cy="196.8" r="4.8" fill="none" stroke="#888" stroke-width="0.9"/><circle cx="462.6" cy="196.8" r="1.6" fill="#888"/>
<rect x="371.2" y="229.6" width="71" height="23.6" rx="3" fill="#fff" stroke="#e2e2e2" stroke-width="0.9"/>
<path d="M374.2,230.05 h20.5 v22.7 h-20.5 a3,3 0 0 1 -2.55,-2.55 v-17.6 a3,3 0 0 1 2.55,-2.55 Z" fill="#e1eef6"/>
<path d="M394.7,230 v22.7 M418.3,230 v22.7" stroke="#e4e4e4" stroke-width="0.9"/>
<rect x="450.6" y="229.6" width="24" height="23.6" rx="3" fill="#fff" stroke="#e4e4e4" stroke-width="0.9"/>
<path d="M457.8,239.2 h9.5 M464.8,236.8 L467.3,239.2 M457.8,244 h9.5 M460.3,241.6 L457.8,244" fill="none" stroke="#333" stroke-width="1.2"/>
<path d="M429.2,278.2 L432.6,281.6 L436,278.2" fill="none" stroke="#777" stroke-width="1"/>
<rect x="356.5" y="292.8" width="82.5" height="1" fill="#e2e2e2"/>
<rect x="450.5" y="267" width="23.5" height="24" rx="3" fill="#f2a12b"/>
<rect x="456" y="313.9" width="18.5" height="7" rx="3.5" fill="#ececec"/><circle cx="460.5" cy="317.4" r="6.9" fill="#fff" stroke="#dedede" stroke-width="0.9"/>
<rect x="356.5" y="353.6" width="66" height="3.8" rx="1.9" fill="#0b74ad"/>
<circle cx="421" cy="355.5" r="6.4" fill="#fff" stroke="#dcdcdc" stroke-width="0.9"/>
<rect x="431" y="368.6" width="43.6" height="1" fill="#e8e8e8"/>
<rect x="453.6" y="383.5" width="18" height="7" rx="3.5" fill="#d7e8f3"/><circle cx="468" cy="387" r="7.1" fill="#0b74ad"/>
<rect x="453.6" y="415.5" width="18" height="7" rx="3.5" fill="#d7e8f3"/><circle cx="468" cy="419" r="7.1" fill="#0b74ad"/>
<rect x="456" y="447.5" width="18.5" height="7" rx="3.5" fill="#ececec"/><circle cx="460.5" cy="451" r="6.9" fill="#fff" stroke="#dedede" stroke-width="0.9"/>
</svg>
<span class="t" style="left:248.00px;top:71.62px;font-size:13.5px;line-height:13.5px;color:#3a3a3a;transform:scaleX(1.029);-webkit-text-stroke:0.45px #3a3a3a;">Filters</span>
<span class="t" style="left:274.60px;top:108.75px;font-size:13px;line-height:13px;color:#444;transform:scaleX(0.945);-webkit-text-stroke:0.45px #444;">Parts Color</span>
<span class="t" style="left:274.60px;top:144.75px;font-size:13px;line-height:13px;color:#444;transform:scaleX(0.949);-webkit-text-stroke:0.45px #444;">Cutting Plane 1</span>
<span class="t" style="left:253.40px;top:191.55px;font-size:11px;line-height:11px;color:#4a4a4a;transform:scaleX(1.073);-webkit-text-stroke:0.45px #4a4a4a;">Position</span>
<span class="t" style="left:253.40px;top:236.05px;font-size:11px;line-height:11px;color:#4a4a4a;transform:scaleX(1.113);-webkit-text-stroke:0.45px #4a4a4a;">Orientation</span>
<span class="t" style="left:253.40px;top:312.15px;font-size:11px;line-height:11px;color:#4a4a4a;transform:scaleX(1.071);-webkit-text-stroke:0.45px #4a4a4a;">Vectors</span>
<span class="t" style="left:240.80px;top:274.38px;font-size:11.2px;line-height:11.2px;color:#555;transform:scaleX(1.043);">Coloring</span>
<span class="t" style="left:359.70px;top:274.28px;font-size:11.2px;line-height:11.2px;color:#555;">Solid Color</span>
<span class="t" style="left:240.80px;top:350.28px;font-size:11.2px;line-height:11.2px;color:#555;transform:scaleX(1.033);">Opacity</span>
<span class="t" style="left:435.00px;top:350.48px;font-size:11.2px;line-height:11.2px;color:#555;">1</span>
<span class="t" style="left:241.00px;top:382.08px;font-size:11.2px;line-height:11.2px;color:#555;">Clip model</span>
<span class="t" style="left:241.00px;top:414.08px;font-size:11.2px;line-height:11.2px;color:#555;transform:scaleX(0.957);">Show mesh</span>
<span class="t" style="left:241.00px;top:446.08px;font-size:11.2px;line-height:11.2px;color:#555;transform:scaleX(0.974);">Show plane</span>
<span class="t" style="left:379.00px;top:236.15px;font-size:11px;line-height:11px;color:#555;">X</span>
<span class="t" style="left:402.50px;top:236.15px;font-size:11px;line-height:11px;color:#555;">Y</span>
<span class="t" style="left:426.00px;top:236.15px;font-size:11px;line-height:11px;color:#555;">Z</span>
<svg class="a" style="left:0;top:0" width="1024" height="551" viewBox="0 0 1024 551">
<rect x="735.4" y="58.4" width="36.6" height="41.5" rx="3.5" fill="#ececec" fill-opacity="0.97"/>
<path d="M777.9,66 v26 M816,66 v26" stroke="#ebebeb" stroke-width="0.8"/>
<polygon points="755.60,72.40 761.49,75.80 761.49,82.60 755.60,86.00 749.71,82.60 749.71,75.80" fill="none" stroke="#666" stroke-width="0.9"/>
<path d="M749.71,75.80 L755.6,79.2 L761.49,75.80 M755.6,79.2 V86.00" fill="none" stroke="#666" stroke-width="0.9"/>
<path d="M767.8,87.5 v2.5 h-2.5" fill="none" stroke="#777" stroke-width="0.8"/>
<polygon points="795.00,72.10 800.63,75.35 800.63,81.85 795.00,85.10 789.37,81.85 789.37,75.35" fill="#c8c8c8" stroke="#9a9a9a" stroke-width="0.8"/>
<path d="M789.37,75.35 L795,78.6 L800.63,75.35 M795,78.6 V85.10" fill="none" stroke="#8a8a8a" stroke-width="0.8"/>
<polygon points="795.00,72.10 800.63,75.35 795.00,78.60 789.37,75.35" fill="#e0e0e0"/>
<path d="M792.2,77 v6.5 M797.8,77 v6.5 M789.5,80.5 L795,83.3 L800.5,80.5 M792,74.2 L797.5,77 M798,74.2 L792.5,77" fill="none" stroke="#a8a8a8" stroke-width="0.6"/>
<path d="M807,87 v2.5 h-2.5" fill="none" stroke="#777" stroke-width="0.8"/>
<polygon points="833.40,72.30 839.12,75.60 839.12,82.20 833.40,85.50 827.68,82.20 827.68,75.60" fill="#d9622c" stroke="#111" stroke-width="1"/>
<polygon points="833.40,72.30 839.12,75.60 833.40,78.90 827.68,75.60" fill="#f2a3a0"/>
<polygon points="833.40,78.90 839.12,75.60 839.12,82.20 833.40,85.50" fill="#ec7050"/>
<path d="M827.68,75.60 L833.4,78.9 L839.12,75.60 M833.4,78.9 V85.50" fill="none" stroke="#222" stroke-width="0.8"/>
<circle cx="833.40" cy="72.30" r="1.1" fill="#111"/><circle cx="839.12" cy="75.60" r="1.1" fill="#111"/><circle cx="839.12" cy="82.20" r="1.1" fill="#111"/><circle cx="833.40" cy="85.50" r="1.1" fill="#111"/><circle cx="827.68" cy="82.20" r="1.1" fill="#111"/><circle cx="827.68" cy="75.60" r="1.1" fill="#111"/><circle cx="833.40" cy="78.90" r="1.1" fill="#111"/>
<rect x="854.6" y="61.5" width="34.8" height="34.8" rx="3.5" fill="#f9f9f9" stroke="#d9eaf5" stroke-width="1"/>
<polygon points="871.50,72.30 877.22,75.60 877.22,82.20 871.50,85.50 865.78,82.20 865.78,75.60" fill="#fff" stroke="#111" stroke-width="1"/>
<polygon points="865.78,75.60 871.50,78.90 871.50,85.50 865.78,82.20" fill="#d9622c"/>
<path d="M865.78,75.60 L871.5,78.9 L877.22,75.60 M871.5,78.9 V85.50" fill="none" stroke="#222" stroke-width="0.8"/>
<circle cx="871.50" cy="72.30" r="1.1" fill="#111"/><circle cx="877.22" cy="75.60" r="1.1" fill="#111"/><circle cx="877.22" cy="82.20" r="1.1" fill="#111"/><circle cx="871.50" cy="85.50" r="1.1" fill="#111"/><circle cx="865.78" cy="82.20" r="1.1" fill="#111"/><circle cx="865.78" cy="75.60" r="1.1" fill="#111"/><circle cx="871.50" cy="78.90" r="1.1" fill="#111"/>
</svg>
<svg class="a" style="left:0;top:0" width="1024" height="551" viewBox="0 0 1024 551">
<circle cx="73" cy="52" r="14.1" fill="#4a87e6"/>
<path d="M74.1,45.2 V59.8 M74.6,45.6 L69.4,49.8" stroke="#fff" stroke-width="2.2" fill="none"/>
<circle cx="333" cy="197" r="14.1" fill="#4a87e6"/>
<text x="333.3" y="204.1" font-family="Liberation Sans" font-size="19.5" fill="#fff" text-anchor="middle">2</text>
<circle cx="333" cy="239.8" r="14.1" fill="#4a87e6"/>
<text x="333.3" y="246.9" font-family="Liberation Sans" font-size="19.5" fill="#fff" text-anchor="middle">3</text>
<circle cx="333" cy="276.3" r="14.1" fill="#4a87e6"/>
<text x="333.3" y="283.40000000000003" font-family="Liberation Sans" font-size="19.5" fill="#fff" text-anchor="middle">4</text>
<circle cx="429.7" cy="417" r="14.1" fill="#4a87e6"/>
<text x="430.0" y="424.1" font-family="Liberation Sans" font-size="19.5" fill="#fff" text-anchor="middle">5</text>
</svg>
</body></html>
